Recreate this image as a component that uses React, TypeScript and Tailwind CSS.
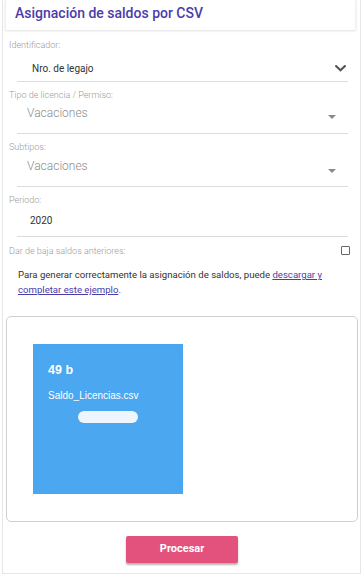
import React from "react";

function Chevron() {
  return (
    <svg width="11" height="7" viewBox="0 0 11 7" className="shrink-0">
      <path d="M1.2 1.2 L5.5 5.3 L9.8 1.2" fill="none" stroke="#555" strokeWidth="2.2" strokeLinecap="square" />
    </svg>
  );
}

function Caret() {
  return (
    <svg width="8" height="4" viewBox="0 0 8 4" className="shrink-0">
      <path d="M0 0 L8 0 L4 4 Z" fill="#8a8a8a" />
    </svg>
  );
}

function Label({ children }: { children: React.ReactNode }) {
  return (
    <div className="h-[14px] pl-[6px] text-[9px] leading-[14px] font-light text-[#9a9a9a]">{children}</div>
  );
}

export default function App() {
  return (
    <div className="w-[363px] h-[575px] bg-white font-['Roboto',sans-serif] overflow-hidden">
      <div className="mx-[2px] w-[359px] h-[574px] border-x border-b border-[#e6e6e6] flex flex-col">
        {/* header */}
        <div className="ml-[2px] mr-[4px] h-[30px] shadow-[0_1px_2px_rgba(0,0,0,0.12)] border-x border-[#f1f1f1] flex items-center pl-[9px]">
          <span className="text-[14px] font-medium text-[#4b3caa] leading-none pb-[4px]">
            Asignación de saldos por CSV
          </span>
        </div>

        {/* field 1 */}
        <div className="mt-[8px]">
          <Label>Identificador:</Label>
          <div className="ml-[14px] mr-[12px] h-[30px] border-b border-[#dcdcdc] flex items-center justify-between pl-[15px] pr-[2px] pt-[3px]">
            <span className="text-[10px] text-[#333]">Nro. de legajo</span>
            <Chevron />
          </div>
        </div>

        {/* field 2 */}
        <div className="mt-[6px]">
          <Label>Tipo de licencia / Permiso:</Label>
          <div className="ml-[14px] mr-[12px] h-[32px] border-b border-[#dcdcdc] flex items-start justify-between pl-[10px] pr-[12px]">
            <span className="mt-[3px] text-[12px] leading-[16px] font-light text-[#8d8d8d]">Vacaciones</span>
            <span className="mt-[13px]"><Caret /></span>
          </div>
        </div>

        {/* field 3 */}
        <div className="mt-[6px]">
          <Label>Subtipos:</Label>
          <div className="ml-[14px] mr-[12px] h-[33px] border-b border-[#dcdcdc] flex items-start justify-between pl-[10px] pr-[12px]">
            <span className="mt-[4px] text-[12px] leading-[16px] font-light text-[#8d8d8d]">Vacaciones</span>
            <span className="mt-[15px]"><Caret /></span>
          </div>
        </div>

        {/* field 4 */}
        <div className="mt-[6px]">
          <Label>Periodo:</Label>
          <div className="ml-[14px] mr-[12px] h-[30px] border-b border-[#dcdcdc] flex items-start pl-[13px]">
            <span className="mt-[6px] text-[10px] leading-[16px] text-[#333]">2020</span>
          </div>
        </div>

        {/* checkbox row */}
        <div className="mt-[7px] h-[14px] flex items-center justify-between pr-[10px]">
          <div className="pl-[6px] text-[9px] leading-[14px] font-light text-[#9a9a9a]">Dar de baja saldos anteriores:</div>
          <div className="w-[9px] h-[9px] border border-[#666] rounded-[1px] mb-[2px]" />
        </div>

        {/* paragraph */}
        <div className="mt-[9px] pl-[15px] pr-[10px] text-[9.6px] leading-[15px] text-[#333] flex flex-col">
          <div>
            Para generar correctamente la asignación de saldos, puede{" "}
            <a className="text-[#4b3caa] underline">descargar y</a>
          </div>
          <div>
            <a className="text-[#4b3caa] underline">completar este ejemplo</a>.
          </div>
        </div>

        {/* dropzone */}
        <div className="mt-[19px] ml-[3px] mr-[2px] h-[206px] border border-[#cfcfcf] rounded-[5px] pt-[27px] pl-[26px]">
          <div className="relative w-[150px] h-[150px] bg-[#49a6ef] font-['Liberation_Sans',Arial,sans-serif]">
            <div className="absolute inset-[3px] rounded-[14px] bg-[#4aa7f0]" />
            <div className="relative pt-[19px] pl-[15px] text-white">
              <div className="text-[12.5px] font-bold leading-[14px]">49 b</div>
              <div className="mt-[13px] text-[10px] leading-[12px]">Saldo_Licencias.csv</div>
            </div>
            <div className="relative mt-[9px] ml-[45px] w-[60px] h-[12px] rounded-full bg-[#eef5fd]" />
          </div>
        </div>

        {/* button */}
        <div className="mt-[14px] flex justify-center pl-[1px]">
          <button className="w-[112px] h-[27px] bg-[#e3527d] rounded-[2px] text-white text-[11px] font-bold shadow-[0_2px_2px_rgba(0,0,0,0.3)]">
            Procesar
          </button>
        </div>
      </div>
    </div>
  );
}
